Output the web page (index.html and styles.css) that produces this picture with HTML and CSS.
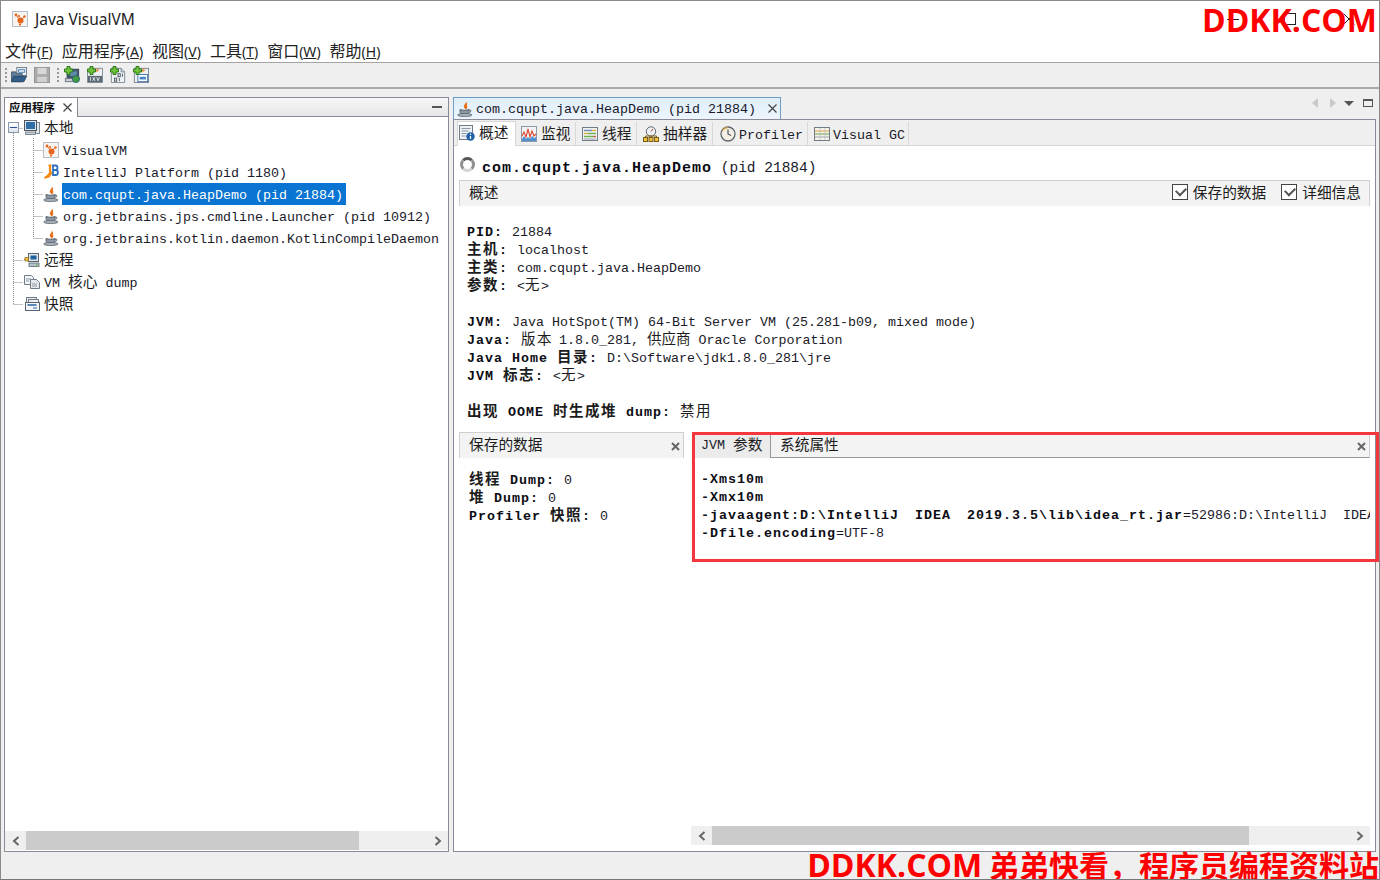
FILE: index.html
```html
<!DOCTYPE html>
<html lang="zh">
<head>
<meta charset="utf-8">
<title>Java VisualVM</title>
<link rel="stylesheet" href="styles.css">
</head>
<body>
<svg class="defs" width="0" height="0" aria-hidden="true">
  <defs>
    <symbol id="java" viewBox="0 0 16 16">
      <path d="M8.500 0c1.800 2.200-2.600 3.600-1.500 6.200.4 1 1.300 1.400 1.800 2.300 1.600-1.300 2.200-3 .9-4.200 1.300-1 0-2.800-1.200-4.300z" fill="#e8701a"/>
      <path d="M3 8.500c2.800 1 6.800 1 9 0v2.300c0 1.500-1.800 2.400-4.500 2.400S3 12.300 3 10.800z" fill="#8d99a6" stroke="#4f5a64" stroke-width=".9"/>
      <path d="M12 9.200c2.400-.5 2.800 1.300.3 2.300" fill="none" stroke="#4f5a64"/>
      <ellipse cx="7.800" cy="14" rx="7.200" ry="1.600" fill="#a6afb7" stroke="#4f5a64" stroke-width=".7"/>
    </symbol>
    <symbol id="vvm" viewBox="0 0 16 16">
      <rect x=".5" y=".5" width="15" height="15" fill="#f7f4f0" stroke="#b5bfca"/>
      <circle cx="8.500" cy="9.500" r="3" fill="#e8641c"/>
      <circle cx="4" cy="4" r="1.400" fill="#e8641c"/><circle cx="7" cy="5" r="1.100" fill="#e8641c"/>
      <circle cx="12.500" cy="5.500" r="1.200" fill="#e8641c"/><circle cx="8" cy="13.600" r="1.100" fill="#e8641c"/>
      <path d="M4 4l4 5M8.500 9.500l4-4" stroke="#e8641c"/>
    </symbol>
    <symbol id="idea" viewBox="0 0 16 16">
      <path d="M5.500 1.500h3M7 1.500v8c0 3-2 4-5 3.500" fill="none" stroke="#f08a12" stroke-width="2.200"/>
      <path d="M1.500 14.500l7-7M9 9l-2 2" stroke="#f08a12" stroke-width="1.600"/>
      <path d="M10 1.500h2.800c2.200 0 2.200 4.500 0 4.500h-2.800h3c2.500 0 2.500 5 0 5h-3z" fill="none" stroke="#2e6fc2" stroke-width="1.800"/>
    </symbol>
    <symbol id="computer" viewBox="0 0 16 16">
      <rect x="11.500" y="2.500" width="4" height="11" fill="#e4e8ec" stroke="#7a858f"/>
      <rect x=".5" y=".5" width="12" height="10" fill="#dfe5ea" stroke="#4a5662"/>
      <rect x="2" y="2" width="9" height="7" fill="#2f6ea8"/>
      <rect x="1.500" y="12" width="10" height="2.500" fill="#c8ced4" stroke="#68737e" stroke-width=".8"/>
    </symbol>
    <symbol id="remote" viewBox="0 0 16 16">
      <rect x="4.500" y="1.500" width="10" height="8" fill="#dfe5ea" stroke="#5b6670"/>
      <rect x="6.500" y="3.500" width="6" height="4" fill="#1f5f9a"/>
      <rect x="5" y="11" width="10" height="3.500" fill="#b8c0c8" stroke="#5b6670" stroke-width=".8"/>
      <circle cx="12.800" cy="12.800" r=".8" fill="#5bb52f"/>
      <path d="M0 7.500h4.500" stroke="#8a6a22"/>
      <rect x="1" y="5.500" width="3.500" height="3.500" fill="#f0c040" stroke="#8a6a22" stroke-width=".7"/>
    </symbol>
    <symbol id="core" viewBox="0 0 16 16">
      <path d="M.5 1.500h7l2 2v7h-9z" fill="#f2f4f6" stroke="#717c87"/>
      <path d="M6.500 5.500h6l3 3v6h-9z" fill="#e4e8ec" stroke="#717c87"/>
      <path d="M2 5h5M2 7h3M8 10h5M8 12h5" stroke="#8d99a6"/>
    </symbol>
    <symbol id="snap" viewBox="0 0 16 16">
      <rect x="2.500" y="1.500" width="10" height="8" fill="#e9edf1" stroke="#717c87"/>
      <rect x="4.500" y="3.500" width="10" height="8" fill="#e9edf1" stroke="#717c87"/>
      <rect x="1.500" y="6.500" width="14" height="8" fill="#f2f4f6" stroke="#5b6670"/>
      <path d="M3.500 9h9" stroke="#2f6ea8" stroke-width="1.600"/>
      <rect x="9" y="11" width="4" height="2" fill="#8fb0d0"/>
    </symbol>
    <symbol id="open" viewBox="0 0 18 18">
      <rect x="6.500" y=".5" width="11" height="9" fill="#e9eef3" stroke="#6b7883"/>
      <path d="M8.500 3h7v3h-7z" fill="none" stroke="#3a78b0"/>
      <path d="M.5 5.500h5l1 2h6v9h-12z" fill="#5f7f9b" stroke="#3f5162"/>
      <path d="M.5 16.500l2.500-6h14.500l-3 6z" fill="#2f5f8a" stroke="#2a4660"/>
    </symbol>
    <symbol id="save" viewBox="0 0 18 18">
      <rect x=".5" y=".5" width="17" height="17" fill="#a9a9a9" stroke="#939393"/>
      <rect x="4" y="1" width="10" height="7" fill="#d8d8d8"/>
      <rect x="3.500" y="11" width="11" height="6" fill="#d0d0d0"/>
    </symbol>
    <symbol id="plus" viewBox="0 0 9 9">
      <path d="M3 .5h3v2.500h2.500v3H6v2.500H3V6H.5V3H3z" fill="#6fc23a" stroke="#2f7a1c"/>
    </symbol>
    <symbol id="tb-net" viewBox="0 0 18 18">
      <rect x="3.500" y="2.500" width="13" height="10" fill="#405c70" stroke="#2d3f4e"/>
      <rect x="6.500" y="5" width="8" height="5" fill="#5f8cab"/>
      <rect x="1.500" y="13" width="11" height="3.500" fill="#c8ced4" stroke="#68737e"/>
      <circle cx="13.500" cy="13.500" r="4" fill="#3f9d3f" stroke="#2a5f7a"/>
    </symbol>
    <symbol id="tb-jmx" viewBox="0 0 18 18">
      <path d="M3.500 1.500h14v16h-17v-12z" fill="#eef1f4" stroke="#76818c"/>
      <path d="M10 5l2-3-1 3 3-2" stroke="#e8801c" fill="none"/>
      <path d="M1 10h16v7H1z" fill="#5a6975"/>
      <path d="M4 11.500v4M6.500 11.500l2.500 4M9 11.500l-2.500 4M11 11.500l1.500 4 1.500-4" stroke="#fff" stroke-width=".9" fill="none"/>
    </symbol>
    <symbol id="tb-bin" viewBox="0 0 18 18">
      <path d="M1.500 1.500h11l4 4v12h-15z" fill="#eef1f4" stroke="#76818c"/>
      <path d="M12.500 1.500v4h4" fill="#cfd6dc" stroke="#76818c"/>
      <rect x="9" y="7.500" width="2.500" height="3.500" fill="none" stroke="#3f4d5a"/><path d="M14 7.500v3.500" stroke="#3f4d5a"/>
      <rect x="5" y="12.500" width="2.500" height="3.500" fill="none" stroke="#3f4d5a"/><path d="M10.500 12.500v3.500" stroke="#3f4d5a"/>
    </symbol>
    <symbol id="tb-snap" viewBox="0 0 18 18">
      <rect x="1.500" y="1.500" width="16" height="16" fill="#eef1f4" stroke="#76818c"/>
      <path d="M10 5l2-3-1 3 3-2" stroke="#e8801c" fill="none"/>
      <rect x="5.500" y="8.500" width="11" height="8" fill="#fff" stroke="#2f6ea8"/>
      <rect x="7.500" y="11" width="7" height="3" fill="#3f83c4"/>
    </symbol>
    <symbol id="t-over" viewBox="0 0 16 16">
      <rect x=".5" y=".5" width="13" height="14" fill="#eef2f6" stroke="#717c87"/>
      <path d="M2.500 3.500h9M2.500 6h7M2.500 8.500h5M2.500 11h4" stroke="#8d9aa6"/>
      <circle cx="11.500" cy="11.500" r="4.200" fill="#1f5fa8"/>
      <path d="M11.500 8.800v1.200M11.500 11v3" stroke="#fff" stroke-width="1.300"/>
    </symbol>
    <symbol id="t-mon" viewBox="0 0 16 16">
      <rect x=".5" y=".5" width="15" height="15" fill="#f2f4f6" stroke="#8d99a6"/>
      <path d="M1 10l2-4 2 5 2-8 2 8 2-6 2 5 2-2" fill="none" stroke="#e0452c" stroke-width="1.100"/>
      <path d="M1 13l2-3 2 3 2-2 2 2 2-3 2 2 2-1v4H1z" fill="#4f8fd0"/>
    </symbol>
    <symbol id="t-thr" viewBox="0 0 16 16">
      <rect x=".5" y="1.500" width="15" height="13" fill="#eef1f4" stroke="#717c87"/>
      <path d="M2 4.500h8" stroke="#6f8fb0" stroke-width="1.400"/><path d="M10 4.500h4" stroke="#e2b33c" stroke-width="1.400"/>
      <path d="M2 7.500h4" stroke="#e2b33c" stroke-width="1.400"/><path d="M6 7.500h8" stroke="#68b04a" stroke-width="1.400"/>
      <path d="M2 10.500h9" stroke="#68b04a" stroke-width="1.400"/><path d="M11 10.500h3" stroke="#c95a4a" stroke-width="1.400"/>
      <path d="M2 13h12" stroke="#9aa5b0"/>
    </symbol>
    <symbol id="t-sam" viewBox="0 0 16 16">
      <circle cx="8" cy="5.500" r="4.700" fill="#eef1f4" stroke="#5b6670"/>
      <path d="M8 5.500l2-2.500" stroke="#b33"/>
      <rect x=".5" y="11.500" width="4" height="4" fill="#f0c040" stroke="#7a5f18"/>
      <rect x="6" y="11.500" width="4" height="4" fill="#f0c040" stroke="#7a5f18"/>
      <rect x="11.500" y="11.500" width="4" height="4" fill="#f0c040" stroke="#7a5f18"/>
      <path d="M2.500 11.500V10h11v1.500M8 10v1.500" fill="none" stroke="#7a5f18"/>
    </symbol>
    <symbol id="t-pro" viewBox="0 0 16 16">
      <circle cx="8" cy="8" r="7" fill="#f4efe2" stroke="#5b6670" stroke-width="1.300"/>
      <path d="M8 3.500V8l3 1.500" fill="none" stroke="#4a5662" stroke-width="1.200"/>
      <path d="M2.500 4.500a7 7 0 0 1 5-3" fill="none" stroke="#e2a33c" stroke-width="1.300"/>
    </symbol>
    <symbol id="t-gc" viewBox="0 0 16 16">
      <rect x=".5" y="1.500" width="15" height="13" fill="#f6f3e8" stroke="#717c87"/>
      <path d="M1 5h14" stroke="#d6a33c"/><path d="M1 8h14" stroke="#68a04a"/><path d="M1 11h14" stroke="#9aa5b0"/>
      <path d="M6 2v12M11 2v12" stroke="#b5bec6" stroke-width=".7"/>
    </symbol>
    <symbol id="chev-l" viewBox="0 0 8 10"><path d="M6.500 1L2 5l4.500 4" fill="none" stroke="#666" stroke-width="2"/></symbol>
    <symbol id="chev-r" viewBox="0 0 8 10"><path d="M1.500 1L6 5 1.500 9" fill="none" stroke="#666" stroke-width="2"/></symbol>
    <symbol id="x-thin" viewBox="0 0 9 9"><path d="M.5.5l8 8M8.500.5l-8 8" stroke="#444" stroke-width="1.200"/></symbol>
    <symbol id="x-bold" viewBox="0 0 9 9"><path d="M1 1l7 7M8 1L1 8" stroke="#666" stroke-width="2"/></symbol>
    <symbol id="x-win" viewBox="0 0 12 12"><path d="M.5.5l11 11M11.500.5l-11 11" stroke="#222"/></symbol>
  </defs>
</svg>

<div class="window">
  <header class="titlebar">
    <svg class="ti"><use href="#vvm"/></svg>
    <span class="title-text">Java VisualVM</span>
  </header>
  <nav class="menubar">
    <span class="menu"><span class="mc">文件</span>(<u>F</u>)</span>
    <span class="menu"><span class="mc">应用程序</span>(<u>A</u>)</span>
    <span class="menu"><span class="mc">视图</span>(<u>V</u>)</span>
    <span class="menu"><span class="mc">工具</span>(<u>T</u>)</span>
    <span class="menu"><span class="mc">窗口</span>(<u>W</u>)</span>
    <span class="menu"><span class="mc">帮助</span>(<u>H</u>)</span>
  </nav>
  <div class="toolbar">
    <span class="grip"></span>
    <svg class="tbi"><use href="#open"/></svg>
    <svg class="tbi"><use href="#save"/></svg>
    <span class="grip grip-b"></span>
    <span class="tbw"><svg class="tbi"><use href="#tb-net"/></svg><svg class="plus"><use href="#plus"/></svg></span>
    <span class="tbw"><svg class="tbi"><use href="#tb-jmx"/></svg><svg class="plus"><use href="#plus"/></svg></span>
    <span class="tbw"><svg class="tbi"><use href="#tb-bin"/></svg><svg class="plus"><use href="#plus"/></svg></span>
    <span class="tbw"><svg class="tbi"><use href="#tb-snap"/></svg><svg class="plus"><use href="#plus"/></svg></span>
  </div>

  <main class="workspace">
    <section class="left">
      <div class="left-head">
        <div class="left-tab"><span class="lt-label">应用程序</span><svg class="x-t"><use href="#x-thin"/></svg></div>
        <span class="minimize"></span>
      </div>
      <div class="tree">
        <svg class="guides" width="60" height="200">
          <path d="M8.500 16V187M28.500 21V121M8.500 11.500H18M8.500 143.500H18M8.500 165.500H18M8.500 187.500H18M28.500 33.500H38M28.500 55.500H38M28.500 77.500H38M28.500 99.500H38M28.500 121.500H38" stroke="#888" stroke-dasharray="1 1" fill="none"/>
        </svg>
        <div class="row r0"><span class="expander"></span><svg class="ic"><use href="#computer"/></svg><span class="lbl c">本地</span></div>
        <div class="row r1"><svg class="ic"><use href="#vvm"/></svg><span class="lbl">VisualVM</span></div>
        <div class="row r1"><svg class="ic"><use href="#idea"/></svg><span class="lbl">IntelliJ Platform (pid 1180)</span></div>
        <div class="row r1"><svg class="ic"><use href="#java"/></svg><span class="lbl sel">com.cqupt.java.HeapDemo (pid 21884)</span></div>
        <div class="row r1"><svg class="ic"><use href="#java"/></svg><span class="lbl">org.jetbrains.jps.cmdline.Launcher (pid 10912)</span></div>
        <div class="row r1"><svg class="ic"><use href="#java"/></svg><span class="lbl">org.jetbrains.kotlin.daemon.KotlinCompileDaemon</span></div>
        <div class="row r0"><svg class="ic"><use href="#remote"/></svg><span class="lbl c">远程</span></div>
        <div class="row r0"><svg class="ic"><use href="#core"/></svg><span class="lbl">VM <span class="c">核心</span> dump</span></div>
        <div class="row r0"><svg class="ic"><use href="#snap"/></svg><span class="lbl c">快照</span></div>
      </div>
      <div class="hscroll hscroll-left">
        <span class="chev"><svg class="chev-i"><use href="#chev-l"/></svg></span>
        <span class="track"><span class="thumb thumb-left"></span></span>
        <span class="chev"><svg class="chev-i"><use href="#chev-r"/></svg></span>
      </div>
    </section>

    <section class="right">
      <div class="doc-strip">
        <div class="doc-tab">
          <svg class="ic"><use href="#java"/></svg>
          <span class="doc-label">com.cqupt.java.HeapDemo (pid 21884)</span>
          <svg class="x-t x-doc"><use href="#x-thin"/></svg>
        </div>
        <div class="doc-ctl">
          <span class="tri tri-l"></span>
          <span class="tri tri-r"></span>
          <span class="tri tri-d"></span>
          <span class="maxi"></span>
        </div>
      </div>
      <div class="doc-body">
        <div class="subtabs">
          <div class="st st-on"><svg class="ic"><use href="#t-over"/></svg><span class="c">概述</span></div>
          <div class="st st-1"><svg class="ic"><use href="#t-mon"/></svg><span class="c">监视</span></div>
          <div class="st st-2"><svg class="ic"><use href="#t-thr"/></svg><span class="c">线程</span></div>
          <div class="st st-3"><svg class="ic"><use href="#t-sam"/></svg><span class="c">抽样器</span></div>
          <div class="st st-4"><svg class="ic"><use href="#t-pro"/></svg><span class="st-lat">Profiler</span></div>
          <div class="st st-5"><svg class="ic"><use href="#t-gc"/></svg><span class="st-lat">Visual GC</span></div>
        </div>
        <div class="heading">
          <span class="spinner"></span>
          <span class="h-main">com.cqupt.java.HeapDemo</span><span class="h-pid"> (pid 21884)</span>
        </div>
        <div class="section-bar">
          <span class="c">概述</span>
          <span class="checks">
            <span class="check"><span class="box"></span><span class="c">保存的数据</span></span>
            <span class="check"><span class="box"></span><span class="c">详细信息</span></span>
          </span>
        </div>
        <div class="info">
          <div><b>PID: </b>21884</div>
          <div><b class="c">主机</b><b>: </b>localhost</div>
          <div><b class="c">主类</b><b>: </b>com.cqupt.java.HeapDemo</div>
          <div><b class="c">参数</b><b>: </b>&lt;<span class="c">无</span>&gt;</div>
          <div class="blank"></div>
          <div><b>JVM: </b>Java HotSpot(TM) 64-Bit Server VM (25.281-b09, mixed mode)</div>
          <div><b>Java: </b><span class="c tight-end">版本</span> 1.8.0_281, <span class="c tight">供应商</span> Oracle Corporation</div>
          <div><b>Java Home </b><b class="c">目录</b><b>: </b>D:\Software\jdk1.8.0_281\jre</div>
          <div><b>JVM </b><b class="c">标志</b><b>: </b>&lt;<span class="c">无</span>&gt;</div>
          <div class="blank"></div>
          <div><b class="c">出现</b><b> OOME </b><b class="c">时生成堆</b><b> dump: </b><span class="c">禁用</span></div>
        </div>
        <div class="panes">
          <div class="pane-left">
            <div class="pane-head"><span class="c">保存的数据</span><svg class="x-b"><use href="#x-bold"/></svg></div>
            <div class="pane-text">
              <div><b class="c">线程</b><b> Dump: </b>0</div>
              <div><b class="c">堆</b><b> Dump: </b>0</div>
              <div><b>Profiler </b><b class="c">快照</b><b>: </b>0</div>
            </div>
          </div>
          <div class="pane-right">
            <div class="pane-head pane-head-tabs">
              <span class="ptab ptab-on">JVM <span class="c">参数</span></span>
              <span class="ptab c">系统属性</span>
              <svg class="x-b"><use href="#x-bold"/></svg>
            </div>
            <div class="pane-args">
              <div><b>-Xms10m</b></div>
              <div><b>-Xmx10m</b></div>
              <div><b>-javaagent:D:\IntelliJ</b>  <b>IDEA</b>  <b>2019.3.5\lib\idea_rt.jar</b>=52986:D:\IntelliJ  IDEA</div>
              <div><b>-Dfile.encoding</b>=UTF-8</div>
            </div>
            <div class="hscroll hscroll-right">
              <span class="chev"><svg class="chev-i"><use href="#chev-l"/></svg></span>
              <span class="track"><span class="thumb thumb-right"></span></span>
              <span class="chev"><svg class="chev-i"><use href="#chev-r"/></svg></span>
            </div>
          </div>
        </div>
      </div>
    </section>
  </main>
  <footer class="statusbar"></footer>

  <div class="win-ctl"><span class="wc-min"></span><span class="wc-max"></span><svg class="wc-close"><use href="#x-win"/></svg></div>
  <div class="wm-top">DDKK.COM</div>
  <div class="wm-bottom"><span class="wm-lat">DDKK.COM</span> 弟弟快看，程序员编程资料站</div>
  <div class="red-box"></div>
</div>
</body>
</html>
```
FILE: styles.css
```css
* { box-sizing: border-box; }
html, body { margin: 0; padding: 0; }
body {
  width: 1380px;
  height: 880px;
  overflow: hidden;
  background: #fff;
  font-family: "Liberation Mono", "Noto Sans CJK SC", monospace;
  font-size: 13.33px;
  color: #1a1a2a;
}
.defs { position: absolute; }
.window {
  position: relative;
  width: 1380px;
  height: 880px;
  display: flex;
  flex-direction: column;
  border-top: 1px solid #8a8a8a;
  border-left: 1px solid #8a8a8a;
  border-bottom: 1px solid #777;
  border-right: 1px solid #8a8a8a;
  overflow: hidden;
}
.c {
  font-family: "Noto Sans CJK SC", "Liberation Sans", sans-serif;
  font-size: 14.7px;
  line-height: 14px;
  font-weight: 400;
  color: #1c1c1c;
}
b { letter-spacing: 1px; font-weight: 700; color: #0c0c14; }
b.c { font-weight: 700; }
.info .c, .pane-text .c { font-size: 14.5px; letter-spacing: 1.5px; line-height: 10px; }
.info .tight { letter-spacing: 0; }
.info .tight-end { margin-right: -2px; }

.titlebar { height: 34px; flex: none; background: #fff; display: flex; align-items: center; padding: 2px 0 0 11px; gap: 7px; }
.ti { width: 16px; height: 16px; }
.title-text { font-family: "Noto Sans", "Liberation Sans", sans-serif; font-size: 15.5px; color: #222; }

.menubar { height: 28px; flex: none; background: #fff; border-bottom: 1px solid #a3a3a3; display: flex; align-items: center; padding: 2px 0 0 4px; gap: 9px; }
.menu { font-family: "Noto Sans", "Noto Sans CJK SC", sans-serif; font-size: 14px; color: #222; white-space: nowrap; }
.mc { font-family: "Noto Sans CJK SC", sans-serif; font-size: 16px; }

.toolbar { height: 26px; flex: none; background: #efefef; border-bottom: 2px solid #a8a8a8; display: flex; align-items: center; padding-left: 4px; }
.grip { width: 2px; height: 15px; margin-right: 4px; background: repeating-linear-gradient(#999 0 2px, transparent 2px 4px); }
.grip-b { margin: 0 5px 0 0; }
.tbi { width: 16px; height: 16px; margin-right: 7px; display: block; }
.tbw { position: relative; display: block; width: 16px; height: 16px; margin-right: 7px; }
.plus { position: absolute; left: 0; top: -1px; width: 9px; height: 9px; }

.workspace { flex: 1; min-height: 0; background: #efefef; display: flex; padding: 8px 0 0 3px; gap: 4px; }

.left { width: 445px; height: 755px; flex: none; border: 1px solid #8a8a96; background: #fff; display: flex; flex-direction: column; }
.left-head { height: 19px; flex: none; display: flex; justify-content: space-between; align-items: center; background: linear-gradient(#f7f7f7, #e6e6e6); border-bottom: 1px solid #8a8a96; }
.left-tab { height: 19px; width: 73px; background: #fff; border-right: 1px solid #8a8a96; display: flex; align-items: center; padding-left: 4px; }
.lt-label { font-family: "Noto Sans CJK SC", sans-serif; font-weight: 700; font-size: 11.5px; color: #111; }
.x-t { width: 9px; height: 9px; flex: none; margin-left: 8px; }
.minimize { width: 10px; height: 2px; background: #555; margin-right: 6px; }

.tree { position: relative; flex: 1; }
.guides { position: absolute; left: 0; top: 0; }
.row { height: 22px; display: flex; align-items: center; white-space: pre; position: relative; }
.r0 { padding-left: 19px; }
.r1 { padding-left: 38px; }
.ic { width: 16px; height: 16px; flex: none; display: block; }
.lbl { margin-left: 3px; padding: 0 1px; height: 22px; line-height: 26px; }
.lbl.c { margin-top: -2px; line-height: 22px; }
.r1 .lbl.sel { background: #0a74d2; color: #fff; padding-right: 3px; }
.expander { position: absolute; left: 3px; top: 5px; width: 11px; height: 11px; border: 1px solid #8a97a8; background: linear-gradient(#fff, #dde3ea); }
.expander::after { content: ""; position: absolute; left: 1px; right: 1px; top: 4px; height: 1px; background: #2c4f96; }

.hscroll { height: 19px; flex: none; display: flex; align-items: center; background: #efefef; }
.chev { width: 21px; height: 19px; flex: none; display: flex; align-items: center; justify-content: center; }
.chev-i { width: 8px; height: 10px; }
.track { flex: 1; height: 19px; display: block; }
.thumb { display: block; height: 19px; background: #cbcbcb; }
.thumb-left { width: 333px; }
.thumb-right { width: 537px; }
.hscroll-left { margin-bottom: 1px; }

.right { width: 923px; height: 755px; flex: none; display: flex; flex-direction: column; }
.doc-strip { height: 22px; flex: none; display: flex; justify-content: space-between; }
.doc-tab { width: 328px; height: 22px; background: linear-gradient(#dfeefb, #edf5fc); border: 1px solid #6d9ec8; border-bottom: none; display: flex; align-items: center; padding-left: 3px; gap: 3px; }
.doc-label { white-space: nowrap; width: 285px; padding-top: 2px; }
.x-doc { margin-left: 4px; }
.doc-ctl { display: flex; align-items: center; padding-right: 3px; padding-bottom: 10px; }
.tri { width: 0; height: 0; border-style: solid; display: block; }
.tri-l { border-width: 5px 6px 5px 0; border-color: transparent #c9c9c9 transparent transparent; margin-right: 12px; }
.tri-r { border-width: 5px 0 5px 6px; border-color: transparent transparent transparent #c9c9c9; margin-right: 8px; }
.tri-d { border-width: 5px 5px 0 5px; border-color: #555 transparent transparent transparent; margin-right: 9px; }
.maxi { width: 10px; height: 8px; border: 1px solid #555; border-top-width: 2px; }

.doc-body { flex: 1; min-height: 0; width: 923px; border: 1px solid #8a8a96; background: #fff; display: flex; flex-direction: column; }
.subtabs { height: 26px; flex: none; background: #efefef; border-bottom: 1px solid #d6d6d6; display: flex; align-items: flex-end; padding-left: 3px; white-space: nowrap; }
.st { height: 23px; display: flex; align-items: center; gap: 4px; border-right: 1px solid #d8d8d8; }
.st .c { margin-top: -2px; }
.st-on { width: 59px; height: 25px; background: #fff; border: 1px solid #d6d6d6; border-bottom: none; margin-bottom: -1px; padding-left: 1px; padding-bottom: 3px; }
.st-1 { width: 60px; padding-left: 5px; }
.st-2 { width: 61px; padding-left: 6px; }
.st-3 { width: 76px; padding-left: 6px; }
.st-4 { width: 95px; padding-left: 7px; gap: 3px; }
.st-5 { width: 101px; padding-left: 6px; gap: 3px; }
.st-lat { padding-top: 4px; }

.heading { height: 34px; flex: none; display: flex; align-items: center; padding: 10px 0 0 6px; white-space: pre; }
.spinner { width: 15px; height: 15px; border-radius: 50%; border: 3px solid #8f8f8f; border-top-color: #555; border-bottom-color: #d5d5d5; margin-right: 7px; margin-top: -8px; }
.h-main { font-size: 15px; font-weight: 700; letter-spacing: 1px; color: #0c0c14; }
.h-pid { font-size: 14.5px; }

.section-bar { height: 26px; flex: none; margin: 0 5px; width: 911px; background: #f3f3f3; border: 1px solid #cfcfcf; border-bottom: none; display: flex; justify-content: space-between; align-items: center; padding: 0 8px 3px 9px; }
.checks { display: flex; gap: 15px; }
.check { display: flex; align-items: center; gap: 5px; }
.box { width: 16px; height: 16px; border: 1px solid #444; background: #fff; position: relative; display: block; }
.box::after { content: ""; position: absolute; left: 3px; top: 2px; width: 8px; height: 5px; border-left: 2px solid #555; border-bottom: 2px solid #555; transform: rotate(-45deg); }

.info { flex: none; height: 226px; padding: 18px 0 0 13px; line-height: 18px; }
.info > div, .pane-text > div, .pane-args > div { height: 18px; line-height: 18px; white-space: pre; }

.panes { flex: 1; min-height: 0; display: flex; padding-left: 5px; gap: 9px; }
.pane-left { width: 225px; flex: none; }
.pane-right { width: 677px; flex: none; display: flex; flex-direction: column; }
.pane-head { height: 26px; background: #f3f3f3; border: 1px solid #cfcfcf; border-bottom: none; display: flex; align-items: center; padding: 0 0 3px 9px; position: relative; }
.pane-head-tabs { border-left: 1px solid #999; border-bottom: 1px solid #999; padding: 0; }
.ptab { height: 25px; display: flex; align-items: center; padding-left: 7px; white-space: pre; }
.ptab-on { width: 77px; background: #ebebeb; border-right: 1px solid #999; }
.ptab-on .c { margin-top: -2px; }
.ptab.c { padding: 0 0 3px 9px; }
.x-b { position: absolute; right: 3px; top: 9px; width: 9px; height: 9px; }
.pane-text { padding: 14px 0 0 10px; }
.pane-args { flex: 1; min-height: 0; overflow: hidden; padding: 13px 0 0 8px; }
.hscroll-right { margin: 0 0 6px -2px; width: 679px; }

.statusbar { height: 27px; flex: none; background: #efefef; }

.win-ctl { position: absolute; top: 12px; left: 1226px; height: 12px; display: flex; align-items: center; }
.wc-min { width: 12px; height: 1px; background: #222; margin-right: 45px; }
.wc-max { width: 12px; height: 12px; border: 1px solid #222; margin-right: 47px; }
.wc-close { width: 12px; height: 12px; }
.wm-top { position: absolute; top: -1px; right: 2px; font-family: "Open Sans", "Liberation Sans", sans-serif; font-weight: 700; font-size: 32px; line-height: 40px; color: #ff0000; white-space: nowrap; }
.wm-bottom { position: absolute; bottom: -3px; right: 0; font-family: "Noto Sans CJK SC", sans-serif; font-weight: 700; font-size: 30px; line-height: 34px; color: #ff0000; white-space: nowrap; }
.wm-lat { font-family: "Open Sans", "Liberation Sans", sans-serif; font-size: 32px; }
.red-box { position: absolute; left: 691px; top: 431px; width: 687px; height: 130px; border: 3px solid #f4373c; }
```
